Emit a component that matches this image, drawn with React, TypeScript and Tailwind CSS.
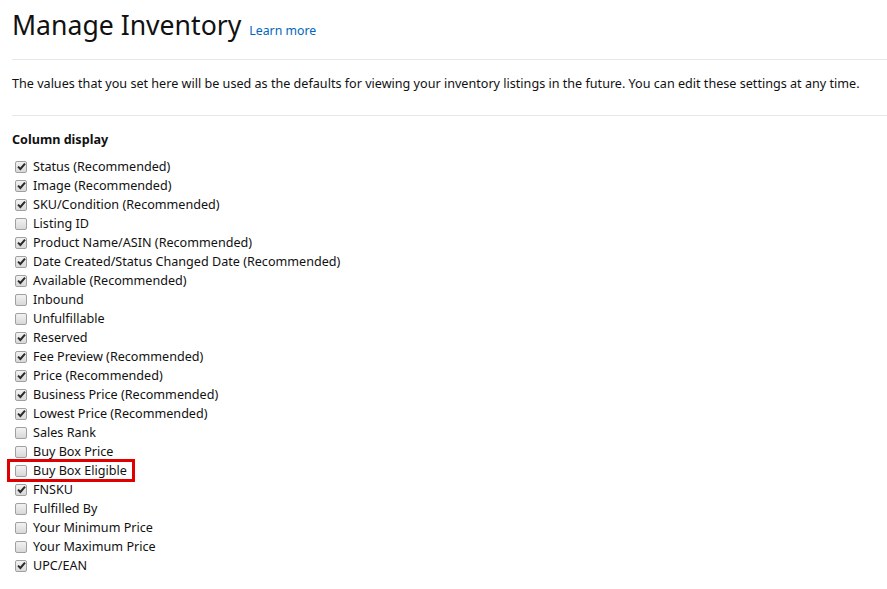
import React from 'react';

const columns: { label: string; checked: boolean }[] = [
  { label: 'Status (Recommended)', checked: true },
  { label: 'Image (Recommended)', checked: true },
  { label: 'SKU/Condition (Recommended)', checked: true },
  { label: 'Listing ID', checked: false },
  { label: 'Product Name/ASIN (Recommended)', checked: true },
  { label: 'Date Created/Status Changed Date (Recommended)', checked: true },
  { label: 'Available (Recommended)', checked: true },
  { label: 'Inbound', checked: false },
  { label: 'Unfulfillable', checked: false },
  { label: 'Reserved', checked: true },
  { label: 'Fee Preview (Recommended)', checked: true },
  { label: 'Price (Recommended)', checked: true },
  { label: 'Business Price (Recommended)', checked: true },
  { label: 'Lowest Price (Recommended)', checked: true },
  { label: 'Sales Rank', checked: false },
  { label: 'Buy Box Price', checked: false },
  { label: 'Buy Box Eligible', checked: false },
  { label: 'FNSKU', checked: true },
  { label: 'Fulfilled By', checked: false },
  { label: 'Your Minimum Price', checked: false },
  { label: 'Your Maximum Price', checked: false },
  { label: 'UPC/EAN', checked: true },
];

function Checkbox({ checked }: { checked: boolean }) {
  return (
    <span className="flex h-[12px] w-[12px] shrink-0 items-center justify-center rounded-[2px] border border-[#a0a0a0] bg-gradient-to-b from-[#f2f2f2] to-[#d8d8d8]">
      {checked && (
        <svg width="9" height="9" viewBox="0 0 9 9">
          <path d="M1 4.6 L3.4 7 L8 1.6" fill="none" stroke="#2a2a2a" strokeWidth="2" />
        </svg>
      )}
    </span>
  );
}

export default function App() {
  return (
    <div className="min-h-screen bg-white pl-3 text-[#111] [font-family:'Noto_Sans',sans-serif]">
      <div className="flex items-baseline gap-2 pt-[6px] pb-[15px]">
        <h1 className="text-[26.6px] leading-[38px] font-normal">Manage Inventory</h1>
        <a className="text-[12.3px] text-[#0066c0]">Learn more</a>
      </div>
      <div className="border-t border-[#e7e7e7]" />
      <p className="pt-[14px] pb-[22px] text-[12.6px] leading-[19px]">
        The values that you set here will be used as the defaults for viewing your inventory listings in the future. You can edit these settings at any time.
      </p>
      <div className="border-t border-[#e7e7e7]" />
      <h2 className="pt-[14px] pb-[8px] text-[12.6px] leading-[19px] font-bold">Column display</h2>
      <ul className="flex flex-col">
        {columns.map((c) => (
          <li key={c.label} className="relative flex h-[19px] items-center gap-[6px] pl-[3px]">
            <Checkbox checked={c.checked} />
            <span className="text-[12.6px] leading-[19px]">{c.label}</span>
            {c.label === 'Buy Box Eligible' && (
              <span className="absolute -left-[5px] -top-[2px] h-[23px] w-[128px] border-[3px] border-[#e00000]" />
            )}
          </li>
        ))}
      </ul>
    </div>
  );
}
